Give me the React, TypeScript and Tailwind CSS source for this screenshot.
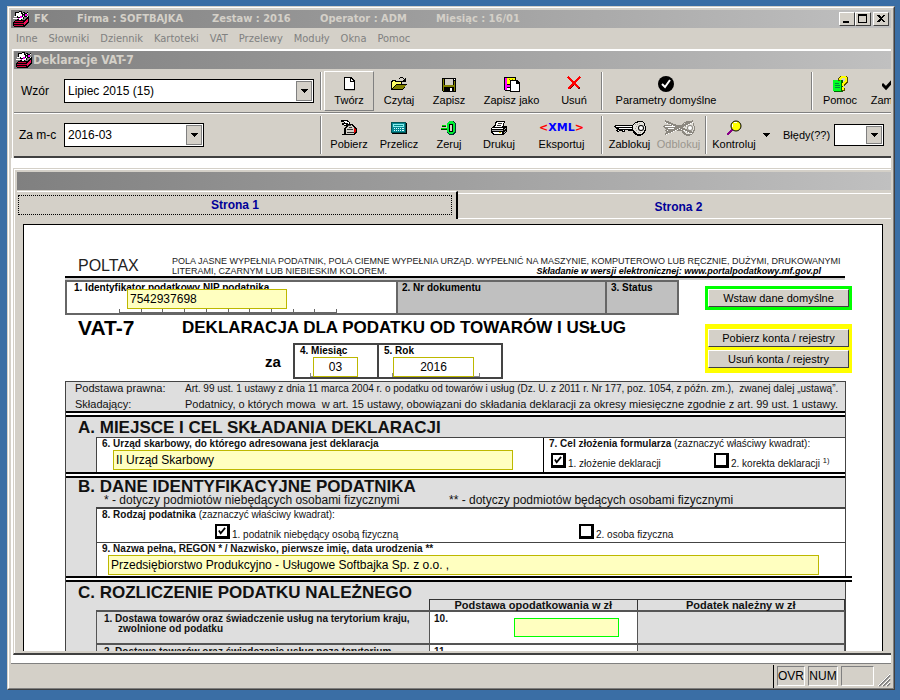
import type { ReactNode } from 'react'

const menuItems = ['Inne', 'Słowniki', 'Dziennik', 'Kartoteki', 'VAT', 'Przelewy', 'Moduły', 'Okna', 'Pomoc']

const raised = 'border border-t-white border-l-white border-r-[#404040] border-b-[#404040] bg-[#d4d0c8]'
const sunken = 'border border-t-[#808080] border-l-[#808080] border-r-white border-b-white'

function Icon({ children, w = 16 }: { children: ReactNode; w?: number }) {
  return (
    <svg width={w} height={16} viewBox={`0 0 ${w} 16`} shapeRendering="crispEdges" aria-hidden="true" className="shrink-0">
      {children}
    </svg>
  )
}

function BookIcon() {
  return (
    <Icon>
      <path d="M3 9h8l4-4h1v6l-5 5H1l-1-1v-4z" fill="#000" />
      <path d="M2 10h8v1H2zM1 12h10v1H1zM1 14h9v1H1z" fill="#d0003c" />
      <path d="M11 11l4-4v3l-4 4z" fill="#f0105c" />
      <path d="M2 1l7-1 1 4 1 4-7 2 1-3-3-2z" fill="#000" />
      <path d="M3 2l5-1 1 3 1 4-4 1 1-3-4-1z" fill="#fff" />
      <path d="M1 5h3v1H1zM0 7h5v1H0z" fill="#fff" />
      <path d="M10 1h2v1h2V1h1v2h-1v2h2v2h-2V6h-3V4h-1z" fill="#000" />
      <path d="M10 2h1v1h-1zM14 2h1v1h-1zM10 5h1v1h-1zM14 5h1v1h-1z" fill="#fff" />
      <path d="M12 3h2v2h-2zM7 5h2v2H7zM5 7h1v1H5z" fill="#f0f" />
    </Icon>
  )
}

function NewIcon() {
  return (
    <Icon>
      <path d="M4 2h8l2 3v10H4z" fill="#a8a49c" />
      <path d="M3 1h7l4 4v9H3z" fill="#000" />
      <path d="M4 2h5v4h4v7H4z" fill="#fff" />
      <path d="M10 3l2 2h-2z" fill="#fff" />
    </Icon>
  )
}

function OpenIcon() {
  return (
    <Icon>
      <path d="M0 5h1V4h4v1h6v3h5l-4 6H0z" fill="#000" />
      <path d="M1 6h1V5h2v1h6v2H5l-4 5z" fill="#ff6" />
      <path d="M5 9h10l-3 4H2z" fill="#808000" />
      <path d="M8 2h1V1h3v1h1v1h1V2h1v4h-4V5h1V4h1V3h-1V2H9v1H8z" fill="#000" />
    </Icon>
  )
}

function SaveIcon() {
  return (
    <Icon>
      <path d="M1 2h14v14H2l-1-1z" fill="#000" />
      <path d="M2 3h1v12H2zM13 5h1v10h-1zM3 9h10v2H3z" fill="#808000" />
      <path d="M4 3h8v6H4z" fill="#d4d0c8" />
      <path d="M13 3h1v1h-1z" fill="#fff" />
      <path d="M9 12h2v3H9z" fill="#fff" />
    </Icon>
  )
}

function SaveAsIcon() {
  return (
    <Icon>
      <path d="M0 1h12v14H1l-1-1z" fill="#000" />
      <path d="M1 2h2v12H1zM2 9h4v2H2z" fill="#f0f" />
      <path d="M3 2h8v6H3z" fill="#ff0" />
      <path d="M5 3h1v1H5zM8 3h1v1H8zM6 5h1v1H6z" fill="#808000" />
      <path d="M3 12h3v2H3z" fill="#fff" />
      <path d="M6 4h7l3 3v9H6z" fill="#000" />
      <path d="M7 5h5v3h3v7H7z" fill="#fff" />
    </Icon>
  )
}

function DeleteIcon() {
  return (
    <Icon>
      <path d="M3 2l11 11M14 1L3 13" stroke="#700" strokeWidth={2} />
      <path d="M2 1l11 11M14 1L2 13" stroke="#f00" strokeWidth={2} />
    </Icon>
  )
}

function CheckDiscIcon() {
  return (
    <Icon>
      <circle cx={8} cy={8} r={8} fill="#000" shapeRendering="auto" />
      <path d="M4 8l3 3 5-7" fill="none" stroke="#fff" strokeWidth={2} shapeRendering="auto" />
    </Icon>
  )
}

function HelpIcon() {
  return (
    <Icon>
      <path d="M2 4h9v12H2z" fill="#060" />
      <path d="M1 4h8v11H1z" fill="#0f2" />
      <path d="M3 7h4v1H3zM3 9h5v1H3zM3 11h5v1H3z" fill="#084" />
      <path d="M8 4V2l1-1h4l2 1v3l-4 3v2h2V9l3-3V1l-2-1H8L6 2v3h2z" fill="#554c00" />
      <path d="M7 4V2l2-2h4l2 2v3l-3 3v2h-2V7l3-2V3l-1-1h-2L9 3v1z" fill="#ff0" />
      <path d="M10 12h3v3h-3z" fill="#554c00" />
      <path d="M10 11h2v3h-2z" fill="#ff0" />
    </Icon>
  )
}

function CloseCheckIcon() {
  return (
    <Icon>
      <path d="M0 8l4 4 9-10" fill="none" stroke="#000" strokeWidth={3} shapeRendering="auto" />
    </Icon>
  )
}

function FetchIcon() {
  return (
    <Icon>
      <path d="M0 0h6l3 2v2h3l2 3 2 2v3l-3 3H1v-1h2V9l2-3-4-1V3h2V2H0z" fill="#000" />
      <path d="M2 1h4v1h2v2H7V3H4zM3 4h2v1H3z" fill="#fff" />
      <path d="M5 8l3-3h3l2 3v6H5z" fill="#d4d0c8" />
      <path d="M7 5h3v1H7zM6 9h6v1H6zM6 12h7v1H6zM8 7h3v1H8z" fill="#333" />
      <path d="M13 8l2 2v1l-2 3z" fill="#e00000" />
    </Icon>
  )
}

function CalculatorIcon() {
  return (
    <Icon>
      <path d="M1 3h15v11H1z" fill="#000" />
      <path d="M0 2h15v11H0z" fill="#055" />
      <path d="M1 3h13v9H1z" fill="#088a96" />
      <path d="M2 4h11v3H2z" fill="#8ee" />
      <path d="M3 5h9v1H3z" fill="#088" />
      <path d="M3 8h1v1H3zM5 8h1v1H5zM7 8h1v1H7zM9 8h1v1H9zM11 8h2v1h-2zM3 10h1v1H3zM5 10h1v1H5zM7 10h1v1H7zM9 10h1v1H9zM11 10h2v1h-2z" fill="#dff" />
    </Icon>
  )
}

function ZeroIcon() {
  return (
    <Icon>
      <path d="M8 1h5l2 3v8l-2 3H8l-2-3V4z" fill="#033" />
      <path d="M8 1h4l2 3v7l-2 3H8l-2-3V4z" fill="#0e3" />
      <path d="M8 4h4v8H8z" fill="#000" />
      <path d="M9 5h2v6H9z" fill="#d4d0c8" />
      <path d="M1 5h4v1H1zM0 8h6v1H0z" fill="#0d0" />
      <path d="M1 6h4v1H1zM0 9h6v1H0z" fill="#030" />
    </Icon>
  )
}

function PrintIcon() {
  return (
    <Icon>
      <path d="M5 1h9l-1 5h2l1 1v4l-4 4H2l-2-2V8l3-2z" fill="#000" />
      <path d="M6 2h7l-2 5H4z" fill="#fff" />
      <path d="M7 3h4v1H7zM6 5h4v1H6z" fill="#333" />
      <path d="M1 8h11v1H1zM2 12h9v2H3z" fill="#fff" />
      <path d="M1 10h11v1H1z" fill="#aaa" />
      <path d="M8 12h2v1H8z" fill="#cc0" />
      <path d="M13 9l2-2v1l-2 2zM13 12l2-2v1l-2 2z" fill="#aaa" />
    </Icon>
  )
}

function KeyIcon({ crossed = false }: { crossed?: boolean }) {
  const line = crossed ? '#8c8880' : '#000'
  return (
    <Icon w={32}>
      <path d="M1 5h18v6h-5v-1h-3v2H8v-1H5v1H3l-1-2 1-1-3-2z" fill={line} />
      <path d="M2 6h17v1H2zM5 8h14v1H5zM4 10h1v1H4zM9 10h1v1H9z" fill="#fff" />
      <path d="M18 5l3-3 3-1h4l3 3 1 3v3l-2 4-4 2h-2l-4-2-2-4z" fill={line} />
      <path d="M19 5l3-2 3-1h3l2 2 1 4-1 4-3 2h-3l-3-2-2-3z" fill="#e4e2dc" />
      <path d="M21 4h1v1h-1zM23 4h1v1h-1zM22 6h1v1h-1zM21 8h1v1h-1zM22 10h1v1h-1zM24 12h1v1h-1zM25 3h1v1h-1zM26 12h1v1h-1z" fill="#a8a49c" />
      <circle cx={27} cy={8} r={3} fill={line} shapeRendering="auto" />
      <circle cx={27} cy={8} r={2} fill="#fff" shapeRendering="auto" />
      {crossed && <path d="M2 2l28 12M2 15L30 2" stroke="#fff" strokeWidth={1} fill="none" />}
      {crossed && <path d="M2 1l28 12M2 14L30 1" stroke="#8c8880" strokeWidth={2} fill="none" />}
    </Icon>
  )
}

function LensIcon() {
  return (
    <Icon>
      <path d="M1 15l6-6" stroke="#808" strokeWidth={2} />
      <circle cx={10} cy={6} r={5} fill="#ff0" stroke="#000" shapeRendering="auto" />
      <path d="M8 2h3v1H8zM6 4h1v3H6z" fill="#fff" />
    </Icon>
  )
}

interface ToolProps {
  label: string
  icon: ReactNode
  width?: string
  active?: boolean
  disabled?: boolean
}

function Tool({ label, icon, width = 'w-[50px]', active, disabled }: ToolProps) {
  return (
    <button
      type="button"
      disabled={disabled}
      className={`flex h-10 shrink-0 flex-col items-center gap-px whitespace-nowrap pt-1 text-[11px] leading-[14px] ${width} ${
        active ? 'border border-t-white border-l-white border-r-[#808080] border-b-[#808080]' : 'border border-transparent'
      } ${disabled ? 'text-[#9a968e]' : 'text-black'}`}
    >
      {icon}
      <span>{label}</span>
    </button>
  )
}

function Separator() {
  return <div className="mx-[2px] h-[38px] w-[2px] shrink-0 border-l border-r border-l-[#808080] border-r-white" />
}

function Combo({ id, value, className }: { id: string; value: string; className: string }) {
  return (
    <div className={`relative shrink-0 ${className}`}>
      <select id={id} defaultValue={value} className="h-full w-full appearance-none border border-black bg-white px-[3px] text-[12px]">
        <option value={value}>{value}</option>
      </select>
      <span className="pointer-events-none absolute top-[2px] right-[2px] bottom-[2px] flex w-4 items-center justify-center border border-[#808080] bg-[#d4d0c8]">
        <Arrow />
      </span>
    </div>
  )
}

function Arrow() {
  return (
    <svg width={8} height={4} viewBox="0 0 8 4" shapeRendering="crispEdges" aria-hidden="true">
      <path d="M0 0h8L4 4z" fill="#000" />
    </svg>
  )
}

function Tick({ id, label, checked, children, className = '' }: { id: string; label: string; checked?: boolean; children?: ReactNode; className?: string }) {
  return (
    <div className={`flex items-start gap-[2px] ${className}`}>
      <span className="relative h-[15px] w-[15px] shrink-0">
        <input
          id={id}
          type="checkbox"
          defaultChecked={checked}
          className="peer block h-[15px] w-[15px] appearance-none border-2 border-r-[3px] border-b-[3px] border-black bg-white"
        />
        <svg viewBox="0 0 9 9" className="pointer-events-none absolute top-[3px] left-[3px] hidden h-[8px] w-[8px] peer-checked:block" aria-hidden="true">
          <path d="M1 4l2 3 5-6" fill="none" stroke="#000" strokeWidth={2} />
        </svg>
      </span>
      <label htmlFor={id} className="pt-1 text-[10px] leading-[14px] whitespace-nowrap">
        {label}
        {children}
      </label>
    </div>
  )
}

function DoubleRule({ className = '' }: { className?: string }) {
  return <div className={`h-[6px] border-t-2 border-b-2 border-black bg-white ${className}`} />
}

const field = 'block h-5 border border-[#bdb800] px-[2px] text-[12px] leading-[18px] text-black'
const yellow = 'bg-[#ffffc0]'
const formButton = `block w-full h-[18px] text-[11px] leading-[16px] ${raised}`
const bracket = '-mt-1 h-1 border-x border-b border-[#888]'

function FormHeader() {
  return (
    <>
      <div className="mr-[7px] flex border-b-2 border-black pt-[31px] leading-[20px]">
        <div className="w-[107px] shrink-0 pl-[13px] text-[16px] text-[#222]">POLTAX</div>
        <div className="min-w-0 flex-1 pr-6 text-[9px] leading-[10px] whitespace-nowrap text-[#222]">
          <p>POLA JASNE WYPEŁNIA PODATNIK, POLA CIEMNE WYPEŁNIA URZĄD. WYPEŁNIĆ NA MASZYNIE, KOMPUTEROWO LUB RĘCZNIE, DUŻYMI, DRUKOWANYMI</p>
          <div className="flex justify-between">
            <span>LITERAMI, CZARNYM LUB NIEBIESKIM KOLOREM.</span>
            <span className="font-bold text-black italic">Składanie w wersji elektronicznej: www.portalpodatkowy.mf.gov.pl</span>
          </div>
        </div>
      </div>
      <div className="mr-[7px] h-[2px] bg-[#d0d0d0]" />
      <div className="flex">
        <div className="min-w-0 flex-1">
          <div className="mr-[26px] flex h-[35px] border-2 border-[#666] text-[10px] leading-[12px] font-bold">
            <div className="flex-1 pl-[7px]">
              <label htmlFor="nip">1. Identyfikator podatkowy NIP podatnika</label>
              <input id="nip" defaultValue="7542937698" className={`${field} ${yellow} relative -mt-[5px] ml-[53px] w-[160px] font-normal`} />
              <div className="ml-[45px] grid h-[4px] w-[218px] grid-cols-10 border-r border-b border-[#666]">
                {Array.from({ length: 10 }, (_, i) => (
                  <span key={i} className="border-l border-[#666]" />
                ))}
              </div>
            </div>
            <div className="w-[209px] border-l-2 border-[#666] bg-[#c0c0c0] pl-1">2. Nr dokumentu</div>
            <div className="w-[72px] border-l-2 border-[#666] bg-[#c0c0c0] pl-1">3. Status</div>
          </div>
          <div className="flex h-7 pl-[13px] leading-[26px] font-bold whitespace-nowrap">
            <h1 className="w-[104px] text-[21px]">VAT-7</h1>
            <h2 className="text-[17px]">DEKLARACJA DLA PODATKU OD TOWARÓW I USŁUG</h2>
          </div>
          <div className="flex h-9 pl-[200px]">
            <span className="w-7 text-[15px] leading-[38px] font-bold">za</span>
            <div className="w-[84px] border-2 border-r-0 border-[#444] pl-[5px] text-[10px] leading-[12px]">
              <label htmlFor="month" className="font-bold">4. Miesiąc</label>
              <input id="month" defaultValue="03" className={`${field} relative ml-[13px] w-[45px] bg-white text-center`} />
              <div className={`${bracket} ml-[10px] w-12`} />
            </div>
            <div className="w-[126px] border-2 border-[#444] pl-[5px] text-[10px] leading-[12px]">
              <label htmlFor="year" className="font-bold">5. Rok</label>
              <input id="year" defaultValue="2016" className={`${field} relative ml-[9px] w-[81px] bg-white text-center`} />
              <div className={`${bracket} ml-[8px] w-[88px]`} />
            </div>
          </div>
        </div>
        <div className="w-[147px] shrink-0 pt-[6px]">
          <div className="mb-[14px] border-[3px] border-[#00ff00]">
            <button type="button" className={formButton}>Wstaw dane domyślne</button>
          </div>
          <div className="space-y-[3px] bg-[#ffff00] px-[3px] py-[5px]">
            <button type="button" className={formButton}>Pobierz konta / rejestry</button>
            <button type="button" className={formButton}>Usuń konta / rejestry</button>
          </div>
        </div>
      </div>
    </>
  )
}

function SalesTable() {
  const rows = [
    { no: '10', lines: ['1. Dostawa towarów oraz świadczenie usług na terytorium kraju,', 'zwolnione od podatku'] },
    { no: '11', lines: ['2. Dostawa towarów oraz świadczenie usług poza terytorium', 'kraju'] },
  ]
  return (
    <table className="ml-[30px] w-[calc(100%-30px)] table-fixed border-collapse text-left text-[10px] leading-[10px] font-bold">
      <colgroup>
        <col className="w-[333px]" />
        <col />
        <col />
      </colgroup>
      <thead>
        <tr className="text-center text-[11px]">
          <td className="p-0" />
          <th scope="col" className="border border-[#333] p-0"><div className="h-[10px] leading-[11px]">Podstawa opodatkowania w zł</div></th>
          <th scope="col" className="border border-[#333] p-0"><div className="h-[10px] leading-[11px]">Podatek należny w zł</div></th>
        </tr>
      </thead>
      <tbody>
        {rows.map((row) => (
          <tr key={row.no} className="h-[33px] align-top">
            <th scope="row" className="border border-t-2 border-[#555] p-0 pt-[2px] pl-[7px]">
              <div className="whitespace-nowrap">{row.lines[0]}</div>
              <div className="pl-[14px]">{row.lines[1]}</div>
            </th>
            <td className="border border-t-2 border-[#555] bg-white p-0 pl-1">
              <div className="flex justify-between pr-[18px]">
                <label htmlFor={`pole-${row.no}`} className="pt-[2px]">{row.no}.</label>
                <input id={`pole-${row.no}`} className="mt-[6px] block h-[19px] w-[105px] border border-[#00ff00] bg-[#ffffc0] text-[12px]" />
              </div>
            </td>
            <td className="border border-t-2 border-[#555] p-0" />
          </tr>
        ))}
      </tbody>
    </table>
  )
}

function Declaration() {
  return (
    <form className="pr-[30px] pl-[41px]">
      <FormHeader />
      <div className="mt-[2px] mr-[6px] border-x border-t border-[#444] bg-[#dedede] text-[#111]">
        <dl className="grid h-[29px] grid-cols-[110px_1fr] gap-y-[3px] pl-[9px] text-[11px] leading-[13px] whitespace-nowrap">
          <dt>Podstawa prawna:</dt>
          <dd className="text-[10px]">Art. 99 ust. 1 ustawy z dnia 11 marca 2004 r. o podatku od towarów i usług (Dz. U. z 2011 r. Nr 177, poz. 1054, z późn. zm.),&nbsp; zwanej dalej „ustawą”.</dd>
          <dt>Składający:</dt>
          <dd>Podatnicy, o których mowa&nbsp; w art. 15 ustawy, obowiązani do składania deklaracji za okresy miesięczne zgodnie z art. 99 ust. 1 ustawy.</dd>
        </dl>
        <DoubleRule />

        <h2 className="h-5 pl-[12px] text-[17px] leading-[22px] font-bold whitespace-nowrap">A. MIEJSCE I CEL SKŁADANIA DEKLARACJI</h2>
        <div className="ml-[30px] flex h-[35px] border-t border-l border-[#444] bg-white">
          <div className="min-w-0 flex-1 pl-[5px] text-[10px] leading-[12px]">
            <label htmlFor="office" className="font-bold">6. Urząd skarbowy, do którego adresowana jest deklaracja</label>
            <input id="office" defaultValue="II Urząd Skarbowy" className={`${field} ${yellow} ml-[11px] w-[400px]`} />
          </div>
          <div className="w-[302px] border-l border-black pl-[5px] text-[10px] leading-[12px]">
            <p className="mb-[3px]"><b>7. Cel złożenia formularza</b> (zaznaczyć właściwy kwadrat):</p>
            <div className="flex pl-[2px]">
              <Tick id="submit" label="1. złożenie deklaracji" checked className="w-[163px]" />
              <Tick id="correct" label="2. korekta deklaracji "><sup>1)</sup></Tick>
            </div>
          </div>
        </div>
        <DoubleRule />

        <h2 className="h-4 pl-[12px] text-[17px] leading-[18px] font-bold">B. DANE IDENTYFIKACYJNE PODATNIKA</h2>
        <div className="flex h-[13px] pl-[38px] text-[12px] leading-[12px]">
          <span className="w-[345px]">* - dotyczy podmiotów niebędących osobami fizycznymi</span>
          <span>** - dotyczy podmiotów będących osobami fizycznymi</span>
        </div>
        <div className="ml-[30px] border-t-2 border-l border-[#444] bg-white text-[10px] leading-[12px]">
          <div className="h-[33px] pl-[5px]">
            <p className="mb-[3px]"><b>8. Rodzaj podatnika</b> (zaznaczyć właściwy kwadrat):</p>
            <div className="flex pl-[113px]">
              <Tick id="company" label="1. podatnik niebędący osobą fizyczną" checked className="w-[364px]" />
              <Tick id="person" label="2. osoba fizyczna" />
            </div>
          </div>
          <div className="h-[34px] border-t border-[#444] pr-[26px] pl-[5px]">
            <label htmlFor="name" className="block font-bold">9. Nazwa pełna, REGON * / Nazwisko, pierwsze imię, data urodzenia **</label>
            <input id="name" defaultValue="Przedsiębiorstwo Produkcyjno - Usługowe Softbajka Sp. z o.o. ," className={`${field} ${yellow} ml-[6px] w-[calc(100%-6px)]`} />
          </div>
        </div>
        <DoubleRule className="relative -mr-[7px]" />

        <h2 className="h-[17px] pl-[12px] text-[17px] leading-[22px] font-bold whitespace-nowrap">C. ROZLICZENIE PODATKU NALEŻNEGO</h2>
        <SalesTable />
      </div>
    </form>
  )
}

function Toolbar() {
  return (
    <div className="border-b-2 border-[#404040] text-[12px]">
      <div className="flex h-[44px] items-center overflow-hidden border-b border-b-[#808080] pt-[2px] pb-px pl-[7px]">
        <label htmlFor="template" className="w-[43px] shrink-0">Wzór</label>
        <Combo id="template" value="Lipiec 2015 (15)" className="mr-1 h-6 w-[250px]" />
        <Separator />
        <Tool label="Twórz" icon={<NewIcon />} active />
        <Tool label="Czytaj" icon={<OpenIcon />} />
        <Tool label="Zapisz" icon={<SaveIcon />} />
        <Tool label="Zapisz jako" icon={<SaveAsIcon />} width="w-[75px]" />
        <Tool label="Usuń" icon={<DeleteIcon />} />
        <Separator />
        <Tool label="Parametry domyślne" icon={<CheckDiscIcon />} width="w-[122px]" />
        <div className="w-[82px] shrink-0" />
        <Separator />
        <Tool label="Pomoc" icon={<HelpIcon />} />
        <Tool label="Zamknij" icon={<CloseCheckIcon />} />
      </div>
      <div className="flex h-[43px] items-center overflow-hidden border-t border-white pt-px pb-px pl-[5px]">
        <label htmlFor="period" className="w-[45px] shrink-0">Za m-c</label>
        <Combo id="period" value="2016-03" className="mr-[114px] h-6 w-[140px]" />
        <Separator />
        <Tool label="Pobierz" icon={<FetchIcon />} />
        <Tool label="Przelicz" icon={<CalculatorIcon />} />
        <Tool label="Zeruj" icon={<ZeroIcon />} />
        <Tool label="Drukuj" icon={<PrintIcon />} />
        <Tool
          label="Eksportuj"
          width="w-[75px]"
          icon={
            <span className="h-4 font-['DejaVu_Sans'] text-[11px] leading-[16px] font-bold text-[#0000ff]">
              <span className="text-[#ff0000]">&lt;</span>XML<span className="text-[#ff0000]">&gt;</span>
            </span>
          }
        />
        <Separator />
        <Tool label="Zablokuj" icon={<KeyIcon />} width="w-[49px]" />
        <Tool label="Odblokuj" icon={<KeyIcon crossed />} width="w-[49px]" disabled />
        <Separator />
        <Tool label="Kontroluj" icon={<LensIcon />} />
        <button type="button" aria-label="Więcej" className="flex h-10 w-[14px] shrink-0 items-center justify-center"><Arrow /></button>
        <label htmlFor="errors" className="ml-[10px] w-[51px] shrink-0 text-[11px]">Błędy(??)</label>
        <Combo id="errors" value="" className="h-[22px] w-[50px]" />
      </div>
    </div>
  )
}

export default function App() {
  return (
    <div className="h-screen bg-[#3a6ea5] pt-[6px] pr-[5px] pb-[10px] pl-[7px] font-['Liberation_Sans',Arial,sans-serif] text-black">
      <div className="h-full border border-t-[#d4d0c8] border-l-[#d4d0c8] border-r-[#404040] border-b-[#404040]">
        <div className="flex h-full flex-col border border-t-white border-l-white border-r-[#808080] border-b-[#808080] bg-[#d4d0c8] px-[2px] pt-[2px]">
          <header className="flex h-[18px] shrink-0 items-center bg-linear-to-r from-[#808080] to-[#c0c0c0] pr-[2px] pl-[2px] font-['DejaVu_Sans_Condensed','DejaVu_Sans',sans-serif] text-[11px] leading-[18px] font-bold whitespace-nowrap text-[#d4d0c8]">
            <BookIcon />
            <span className="ml-[5px] w-[43px]">FK</span>
            <span className="w-[135px]">Firma : SOFTBAJKA</span>
            <span className="w-[108px]">Zestaw : 2016</span>
            <span className="w-[116px]">Operator : ADM</span>
            <span className="flex-1">Miesiąc : 16/01</span>
            <button type="button" aria-label="Minimalizuj" className={`h-[14px] w-4 ${raised}`}>
              <svg viewBox="0 0 14 12" className="block h-3 w-[14px]" shapeRendering="crispEdges"><path d="M3 8h6v2H3z" fill="#000" /></svg>
            </button>
            <button type="button" aria-label="Maksymalizuj" className={`mr-[2px] h-[14px] w-4 ${raised}`}>
              <svg viewBox="0 0 14 12" className="block h-3 w-[14px]" shapeRendering="crispEdges"><path d="M2 1h9v9H2zM3 3v6h7V3z" fill="#000" fillRule="evenodd" /></svg>
            </button>
            <button type="button" aria-label="Zamknij okno" className={`h-[14px] w-4 ${raised}`}>
              <svg viewBox="0 0 14 12" className="block h-3 w-[14px]" shapeRendering="crispEdges"><path d="M3 2h2l2 2 2-2h2L8 5.500 11 9H9L7 7 5 9H3l3-3.500z" fill="#000" /></svg>
            </button>
          </header>
          <nav className="flex h-[21px] shrink-0 gap-[11px] pl-[5px] font-['DejaVu_Sans_Condensed','DejaVu_Sans',sans-serif] text-[11px] leading-[21px] text-[#808080]">
            {menuItems.map((item) => (
              <a key={item} href="#">{item}</a>
            ))}
          </nav>

          <section className="ml-px shrink-0 border-t-2 border-l border-white pl-px">
            <h1 className="flex h-[18px] items-center gap-px bg-linear-to-r from-[#808080] to-[#c0c0c0] pl-[2px] font-['DejaVu_Sans_Condensed','DejaVu_Sans',sans-serif] text-[12px] font-bold text-[#d4d0c8]">
              <BookIcon />
              Deklaracje VAT-7
            </h1>
            <Toolbar />
          </section>

          <main className="flex min-h-0 flex-1 flex-col bg-white pt-[10px] pb-2 pl-[2px]">
            <div className="flex min-h-0 flex-1 flex-col border-t border-b-2 border-l border-t-[#d4d0c8] border-b-[#404040] border-l-[#d4d0c8]">
              <div className="flex min-h-0 flex-1 flex-col border-t border-l border-white bg-[#d4d0c8] pt-[2px] pb-[2px] pl-[2px]">
                <div className="h-[18px] shrink-0 bg-linear-to-r from-[#808080] to-[#c0c0c0]" />
                <div role="tablist" className="flex shrink-0 text-[12px] font-bold text-[#000099]">
                  <button type="button" role="tab" aria-selected="true" className="mt-px h-7 w-[calc(50%+4px)] shrink-0 border-t border-r-2 border-t-white border-r-black pt-[3px] pr-[4px] pb-[4px] pl-px">
                    <span className="block h-5 border border-dotted border-black leading-[18px]">Strona 1</span>
                  </button>
                  <button type="button" role="tab" aria-selected="false" className="mt-[3px] h-[26px] flex-1 border-y border-white pl-2 leading-[26px]">
                    Strona 2
                  </button>
                </div>
                <div className="mt-[5px] mr-2 ml-[6px] min-h-0 flex-1 overflow-hidden border-x border-t border-black bg-white">
                  <Declaration />
                </div>
              </div>
            </div>
          </main>

          <footer className="flex h-[25px] shrink-0 items-center justify-end gap-[3px] border-t border-[#808080] text-[12px] leading-[18px]">
            <div className="h-[23px] w-px bg-black" />
            <span className={`h-5 w-7 text-center ${sunken}`}>OVR</span>
            <span className={`h-5 w-[30px] text-center ${sunken}`}>NUM</span>
            <span className={`h-5 w-[33px] ${sunken}`} />
            <svg width={14} height={14} viewBox="0 0 14 14" className="mt-2" aria-hidden="true">
              <path d="M2 13L13 2M6 13l7-7M10 13l3-3" stroke="#808080" strokeWidth={2} />
              <path d="M1 13L13 1M5 13l8-8M9 13l4-4" stroke="#fff" strokeWidth={1} />
            </svg>
          </footer>
        </div>
      </div>
    </div>
  )
}
